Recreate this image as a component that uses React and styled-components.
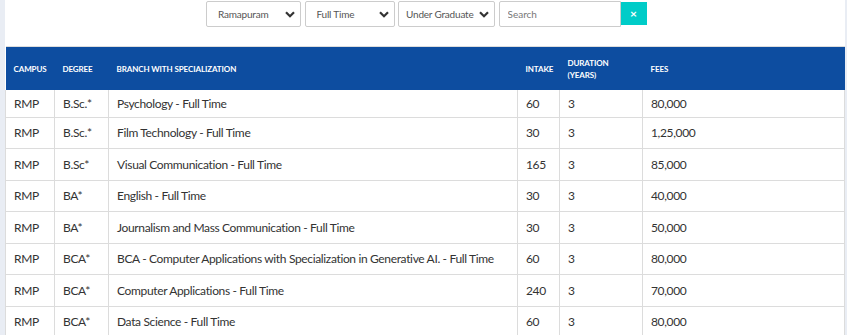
import React from 'react'
import styled, { createGlobalStyle } from 'styled-components'

const GlobalStyle = createGlobalStyle`
  html, body { margin: 0; padding: 0; background: #e9edf4; }
  body { font-family: "Source Sans Pro", Lato, "Open Sans", sans-serif; }
`

const rows = [
  ['RMP', 'B.Sc.*', 'Psychology - Full Time', '60', '3', '80,000'],
  ['RMP', 'B.Sc.*', 'Film Technology - Full Time', '30', '3', '1,25,000'],
  ['RMP', 'B.Sc*', 'Visual Communication - Full Time', '165', '3', '85,000'],
  ['RMP', 'BA*', 'English - Full Time', '30', '3', '40,000'],
  ['RMP', 'BA*', 'Journalism and Mass Communication - Full Time', '30', '3', '50,000'],
  ['RMP', 'BCA*', 'BCA - Computer Applications with Specialization in Generative AI. - Full Time', '60', '3', '80,000'],
  ['RMP', 'BCA*', 'Computer Applications - Full Time', '240', '3', '70,000'],
  ['RMP', 'BCA*', 'Data Science  - Full Time', '60', '3', '80,000'],
]

function Chevron() {
  return (
    <svg width="10" height="7" viewBox="0 0 10 7">
      <path d="M1 1.2 L5 5.2 L9 1.2" fill="none" stroke="#333" strokeWidth="2.2" />
    </svg>
  )
}

function App() {
  return (
    <>
      <GlobalStyle />
      <Page>
        <Filters>
          <Select w={95} pad={11}><span>Ramapuram</span><Chevron /></Select>
          <Select w={90} pad={11}><span>Full Time</span><Chevron /></Select>
          <Select w={97} pad={7}><span>Under Graduate</span><Chevron /></Select>
          <SearchBox>
            <SearchInput placeholder="Search" />
            <ClearButton>×</ClearButton>
          </SearchBox>
        </Filters>
        <Table>
          <colgroup>
            <col style={{ width: 49 }} />
            <col style={{ width: 54 }} />
            <col style={{ width: 409 }} />
            <col style={{ width: 42 }} />
            <col style={{ width: 83 }} />
            <col />
          </colgroup>
          <thead>
            <tr>
              <Th>Campus</Th>
              <Th>Degree</Th>
              <Th>Branch with Specialization</Th>
              <Th>Intake</Th>
              <Th>Duration<br />(Years)</Th>
              <Th>Fees</Th>
            </tr>
          </thead>
          <tbody>
            {rows.map((r, i) => (
              <Row key={i} first={i === 0}>
                {r.map((c, j) => <Td key={j}>{c}</Td>)}
              </Row>
            ))}
          </tbody>
        </Table>
      </Page>
    </>
  )
}

const Page = styled.div`
  margin: 0 2px 0 5px;
  background: #fff;
  height: 335px;
  overflow: hidden;
`

const Filters = styled.div`
  display: flex;
  gap: 3.5px;
  padding: 1px 0 0 201px;
  height: 46px;
  box-sizing: border-box;
`

const Select = styled.div`
  width: ${p => p.w}px;
  height: 26px;
  box-sizing: border-box;
  border: 1px solid #ccc;
  border-radius: 2px;
  display: flex;
  align-items: center;
  justify-content: space-between;
  padding: 0 5px 0 ${p => p.pad}px;
  font-size: 10px;
  letter-spacing: -0.2px;
  white-space: nowrap;
  color: #555;
`

const SearchBox = styled.div`
  display: flex;
  align-items: flex-start;
`

const SearchInput = styled.input`
  width: 122px;
  height: 26px;
  box-sizing: border-box;
  border: 1px solid #ccc;
  border-radius: 2px 0 0 2px;
  padding: 0 8px;
  font-family: inherit;
  font-size: 10px;
  color: #555;
  outline: none;
  &::placeholder { color: #777; }
`

const ClearButton = styled.div`
  width: 26px;
  height: 23px;
  margin-top: 1px;
  background: #00ccc8;
  color: #fff;
  font-size: 12px;
  font-weight: 700;
  display: flex;
  align-items: center;
  justify-content: center;
`

const Table = styled.table`
  width: 840px;
  border-collapse: collapse;
  table-layout: fixed;
  font-size: 12px;
  letter-spacing: -0.35px;
  color: #333;
`

const Th = styled.th`
  background: #0d4da0;
  color: #fff;
  text-transform: uppercase;
  font-size: 8px;
  letter-spacing: -0.1px;
  font-weight: 700;
  text-align: left;
  padding: 0 8px;
  height: 43px;
  line-height: 12px;
  border-top: 1px solid #ddd;
`

const Row = styled.tr`
  height: ${p => (p.first ? 27 : 31.5)}px;
`

const Td = styled.td`
  padding: 0 8px;
  border: 1px solid #dcdcdc;
  border-top: 0;
  white-space: nowrap;
`

export default App
